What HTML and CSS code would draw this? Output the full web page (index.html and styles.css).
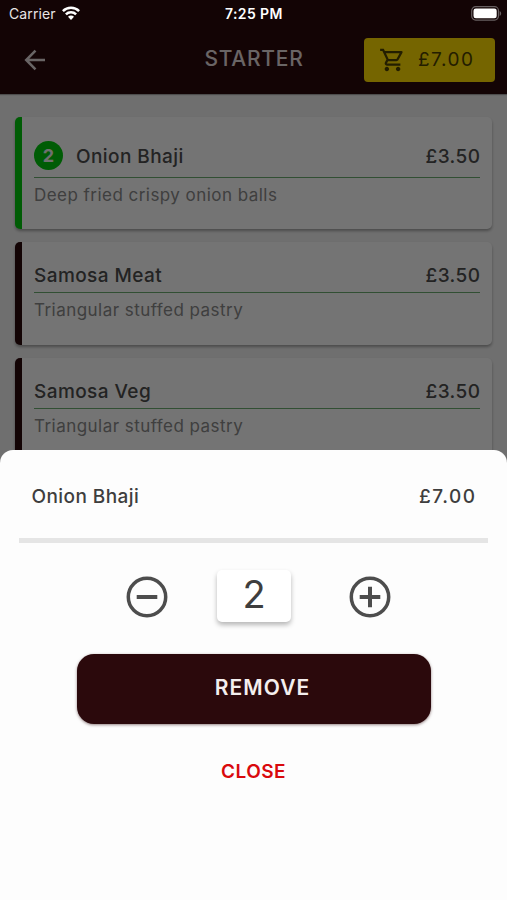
FILE: index.html
```html
<!DOCTYPE html>
<html lang="en">
<head>
<meta charset="utf-8">
<title>Starter</title>
<link rel="stylesheet" href="styles.css">
</head>
<body>
<div class="screen">
  <header class="header">
    <div class="nav">
      <svg class="back" viewBox="0 0 24 24"><path d="M22 12H3.500M12.500 2.700L3.200 12l9.300 9.300" fill="none" stroke="currentColor" stroke-width="2.500"/></svg>
      <h1 class="title">STARTER</h1>
      <div class="basket">
        <svg class="cart" viewBox="0 0 24 24"><path fill="currentColor" d="M15.550 13c.75 0 1.410-.41 1.750-1.030l3.580-6.490A.996.996 0 0 0 20.010 4H5.210l-.94-2H1v2h2l3.600 7.590-1.350 2.440C4.520 15.370 5.480 17 7 17h12v-2H7l1.100-2h7.450zM6.160 6h12.150l-2.760 5H8.530L6.160 6zM7 18c-1.100 0-1.990.9-1.990 2S5.900 22 7 22s2-.9 2-2-.9-2-2-2zm10 0c-1.100 0-1.990.9-1.990 2s.89 2 1.990 2 2-.9 2-2-.9-2-2-2z"/></svg>
        <span class="total">£7.00</span>
      </div>
    </div>
  </header>
  <main class="list">
    <article class="card selected">
      <div class="row"><span class="badge">2</span><span class="name">Onion Bhaji</span><span class="price">£3.50</span></div>
      <p class="desc">Deep fried crispy onion balls</p>
    </article>
    <article class="card">
      <div class="row"><span class="name">Samosa Meat</span><span class="price">£3.50</span></div>
      <p class="desc">Triangular stuffed pastry</p>
    </article>
    <article class="card">
      <div class="row"><span class="name">Samosa Veg</span><span class="price">£3.50</span></div>
      <p class="desc">Triangular stuffed pastry</p>
    </article>
  </main>
  <div class="overlay"></div>
  <div class="status">
    <span class="carrier">Carrier</span>
    <svg class="wifi" viewBox="0 0 18 14"><g fill="none" stroke="#fff" stroke-width="2.500"><path d="M.9 5.200a11.500 11.500 0 0 1 16.200 0"/><path d="M3.900 8.400a7.200 7.200 0 0 1 10.200 0"/></g><path d="M6 10.800a4.200 4.200 0 0 1 6 0L9 13.900z" fill="#fff"/></svg>
    <span class="time">7:25 PM</span>
    <svg class="battery" viewBox="0 0 31 15"><rect x=".7" y=".7" width="26.800" height="13.400" rx="4" fill="none" stroke="#686061" stroke-width="1.200"/><rect x="2.500" y="2.500" width="23.200" height="9.800" rx="2.300" fill="#fff"/><path d="M28.700 5c2 1 2 4 0 5z" fill="#686061"/></svg>
  </div>
  <section class="sheet">
    <div class="line"><span class="name">Onion Bhaji</span><span class="sum">£7.00</span></div>
    <div class="divider"></div>
    <div class="stepper">
      <svg class="round" viewBox="0 0 42 42"><g fill="none" stroke="currentColor"><circle cx="21" cy="21" r="18.700" stroke-width="3.500"/><path d="M10.700 21h20.600" stroke-width="4"/></g></svg>
      <span class="count">2</span>
      <svg class="round" viewBox="0 0 42 42"><g fill="none" stroke="currentColor"><circle cx="21" cy="21" r="18.700" stroke-width="3.500"/><path d="M10.700 21h20.600M21 10.700v20.600" stroke-width="4"/></g></svg>
    </div>
    <button class="remove">REMOVE</button>
    <button class="close">CLOSE</button>
  </section>
</div>
</body>
</html>
```
FILE: styles.css
```css
* { box-sizing: border-box; }
body { margin: 0; font-family: Inter, "Liberation Sans", sans-serif; font-weight: 500; }
.screen { position: relative; width: 507px; height: 900px; overflow: hidden; background: #f2f2f2; }

.header { height: 94px; padding-top: 37px; background: #2b090c; box-shadow: 0 1px 1px rgba(0,0,0,.3); }
.nav { display: grid; grid-template-columns: 131px 1fr 131px; align-items: center; height: 45px; padding: 0 12px 0 23px; }
.back { width: 24px; height: 24px; color: #e5dcdd; }
.title { margin: 0 0 2px; padding-right: 10px; text-align: center; font-size: 21px; font-weight: 500; line-height: 40px; letter-spacing: .75px; color: #e5dcdd; white-space: nowrap; }
.basket { display: flex; align-items: center; width: 131px; height: 44px; padding-left: 15px; border-radius: 4px; background: #ffdc00; color: #4e4200; }
.cart { width: 27px; height: 28px; flex: none; }
.total { margin-left: 12px; font-size: 19px; font-weight: 400; letter-spacing: 1.500px; }

.list { display: flex; flex-direction: column; gap: 13px; padding: 23px 15px 0 15px; }
.card { height: 103px; padding: 17px 12px 0 12px; border-left: 7px solid #2b090c; border-radius: 5px; background: #fdfdfd; box-shadow: 0 2px 3px rgba(0,0,0,.32); }
.selected { height: 112px; padding-top: 22px; border-color: #00c80c; }
.row { display: flex; align-items: center; height: 34px; padding-top: 1px; border-bottom: 1px solid #6bad70; }
.selected .row { height: 39px; padding: 1px 0 4px; }
.badge { width: 29px; height: 29px; margin: -2px 13px 0 0; border-radius: 50%; background: #00c80c; color: #f2f2f2; font-size: 18px; font-weight: 700; line-height: 29px; text-align: center; }
.name, .price, .sum { font-size: 19px; line-height: 24px; letter-spacing: .42px; color: #4c4c4c; white-space: nowrap; }
.price { margin-left: auto; margin-right: -.4px; }
.desc { margin: 6px 0 0; font-size: 17px; font-weight: 400; line-height: 22px; letter-spacing: .46px; color: #898989; white-space: nowrap; }

.overlay { position: absolute; inset: 0; background: rgba(0,0,0,.54); }
.status { position: absolute; top: 0; left: 0; width: 507px; height: 27px; display: flex; align-items: center; padding: 0 5px 0 9px; color: #fff; }
.carrier { width: 53px; font-size: 14px; font-weight: 400; letter-spacing: .1px; color: #e9e5e5; }
.wifi { width: 18px; height: 14px; margin-top: -2px; }
.time { margin-left: 145px; font-size: 14px; font-weight: 600; letter-spacing: .4px; white-space: nowrap; }
.battery { width: 31px; height: 15px; margin-left: auto; }

.sheet { position: absolute; left: 0; right: 0; top: 450px; bottom: 0; display: flex; flex-direction: column; align-items: center; border-radius: 13px 13px 0 0; background: #fdfdfd; }
.line { display: flex; justify-content: space-between; align-items: center; width: 444px; height: 92px; padding-top: 1px; }
.sheet .name, .sum { color: #3e3e3e; }
.sheet .sum { letter-spacing: 1.500px; margin-right: -1px; }
.divider { width: 469px; height: 5px; margin-top: -4px; background: #e5e5e5; }
.stepper { display: flex; justify-content: space-between; align-items: center; width: 265px; height: 54px; margin: 27px 0 0 10px; color: #4d4d4d; }
.round { width: 42px; height: 42px; }
.count { width: 74px; height: 52px; margin: -2px 9px 0 0; border-radius: 5px; background: #fff; box-shadow: 0 3px 5px rgba(0,0,0,.28); color: #3e3e3e; font-size: 38px; font-weight: 400; line-height: 48px; text-align: center; }
.remove, .close { border: 0; font: 600 21px Inter, "Liberation Sans", sans-serif; }
.remove { width: 354px; height: 70px; margin-top: 30px; padding: 0 0 3px 18px; border-radius: 17px; background: #2b090c; color: #f4eeee; letter-spacing: 1.100px; box-shadow: 0 1px 3px rgba(43,9,12,.5); }
.close { margin-top: 36px; padding: 0; background: none; color: #d9090d; font-size: 19px; line-height: 24px; letter-spacing: .45px; }
```
